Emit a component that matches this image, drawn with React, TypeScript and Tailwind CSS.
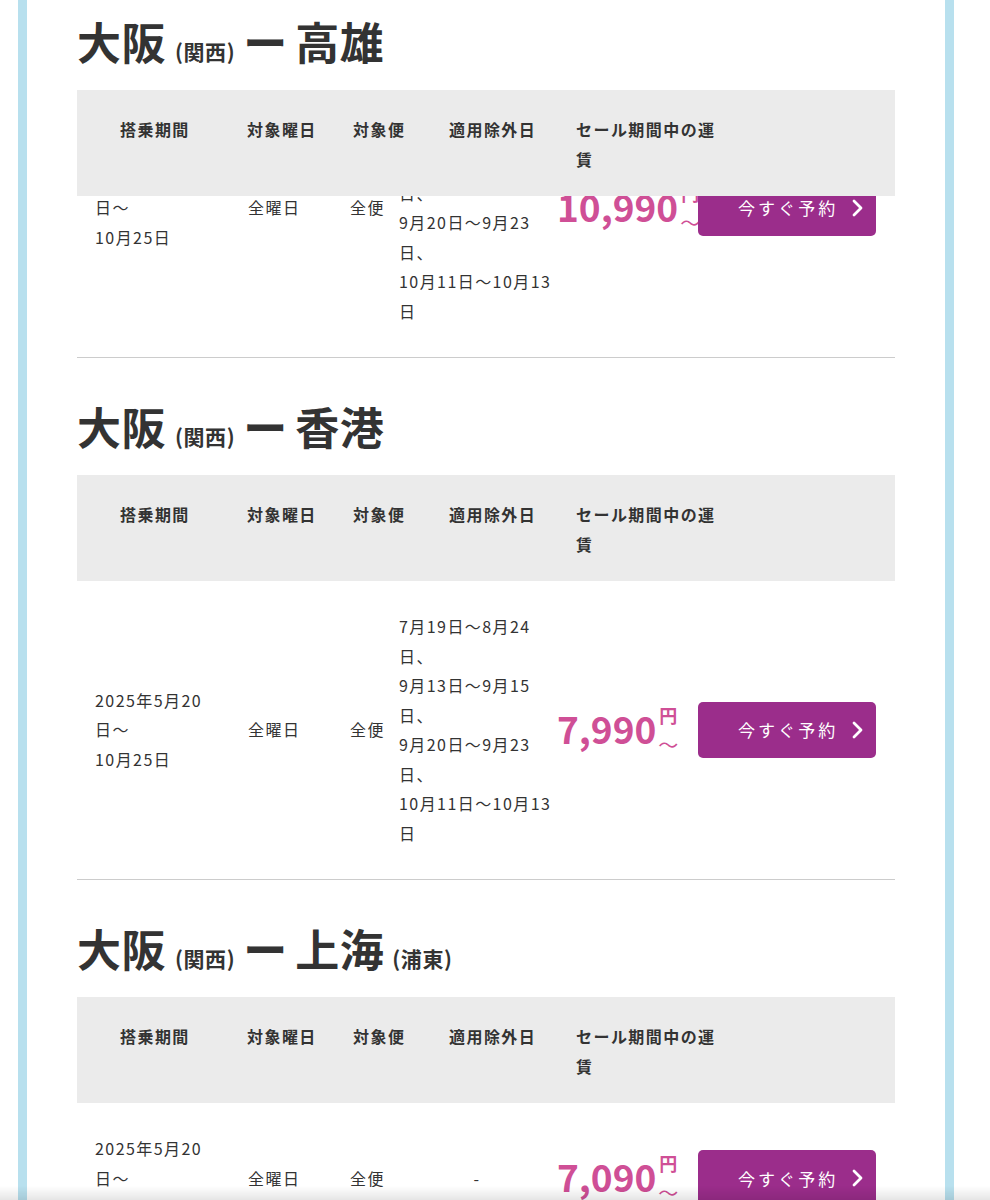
import React from "react";

type Route = {
  from: string;
  fromSub: string;
  to: string;
  toSub?: string;
  price: string;
  excl: string[] | null;
  clipped?: boolean;
};

const routes: Route[] = [
  {
    from: "大阪",
    fromSub: "(関西)",
    to: "高雄",
    price: "10,990",
    excl: ["7月19日～8月24日、", "9月13日～9月15日、", "9月20日～9月23日、", "10月11日～10月13日"],
    clipped: true,
  },
  {
    from: "大阪",
    fromSub: "(関西)",
    to: "香港",
    price: "7,990",
    excl: ["7月19日～8月24日、", "9月13日～9月15日、", "9月20日～9月23日、", "10月11日～10月13日"],
  },
  {
    from: "大阪",
    fromSub: "(関西)",
    to: "上海",
    toSub: "(浦東)",
    price: "7,090",
    excl: null,
  },
];

function Chevron() {
  return (
    <svg width="13" height="20" viewBox="0 0 13 20" fill="none">
      <polyline points="3,3 10,10 3,17" stroke="white" strokeWidth="2.8" strokeLinecap="round" strokeLinejoin="round" />
    </svg>
  );
}

function HeadBand() {
  return (
    <div className="flex items-start h-[106px] bg-[#ebebeb] pt-[24px] pl-[43px] text-[16px] font-bold leading-[30px] tracking-[0.09em] text-[#333]">
      <div className="w-[127px]">搭乗期間</div>
      <div className="w-[106px]">対象曜日</div>
      <div className="w-[96px]">対象便</div>
      <div className="w-[127px]">適用除外日</div>
      <div className="w-[150px]">セール期間中の運賃</div>
    </div>
  );
}

function DataRow({ r }: { r: Route }) {
  return (
    <div className="flex items-center py-[31px] pl-[18px] pr-[18px] text-[16px] leading-[29.5px] tracking-[0.09em] text-[#333]">
      <div className="w-[153px]">
        <div className="w-[120px]">2025年5月20日～</div>
        <div>10月25日</div>
      </div>
      <div className="w-[102px]">全曜日</div>
      <div className="w-[49px]">全便</div>
      <div className="w-[158px]">
        {r.excl ? (
          r.excl.map((t) => (
            <div key={t} className="w-[158px]">
              {t}
            </div>
          ))
        ) : (
          <div className="text-center pr-[2px]">-</div>
        )}
      </div>
      <div className="w-[141px] flex items-start font-bold text-[#cf4f96]">
        <span className="text-[37px] leading-[46px] tracking-[0]">{r.price}</span>
        <span className="flex flex-col items-center ml-[2px] mt-[-2px] tracking-[0]">
          <span className="text-[18px] leading-[24px]">円</span>
          <span className="text-[20px] leading-[20px] font-normal mt-[8px]">～</span>
        </span>
      </div>
      <button className="flex items-center w-[178px] h-[56px] rounded-[5px] bg-[#9b2d8b] pl-[40px] text-white text-[17px] tracking-[0.18em]">
        <span>今すぐ予約</span>
        <span className="ml-[13px] flex items-center">
          <Chevron />
        </span>
      </button>
    </div>
  );
}

function Section({ r, first }: { r: Route; first?: boolean }) {
  return (
    <section className={first ? "" : "mt-[38px]"}>
      <h2 className="flex items-baseline h-[60px] leading-[60px] font-bold text-[#333]">
        <span className="text-[44px] tracking-[0.01em]">{r.from}</span>
        <span className="text-[21px] ml-[9px] tracking-[0.03em]">{r.fromSub}</span>
        <span className="text-[44px] ml-[8px]">ー</span>
        <span className="text-[44px] ml-[8px] tracking-[0.01em]">{r.to}</span>
        {r.toSub && <span className="text-[21px] ml-[8px] tracking-[0.03em]">{r.toSub}</span>}
      </h2>
      <div className="mt-[19px]">
        <HeadBand />
      </div>
      {r.clipped ? (
        <div className="h-[161px] overflow-hidden border-b border-[#cccccc] box-content">
          <div className="-mt-[137px]">
            <DataRow r={r} />
          </div>
        </div>
      ) : (
        <div className="border-b border-[#cccccc]">
          <DataRow r={r} />
        </div>
      )}
    </section>
  );
}

export default function App() {
  return (
    <div className="relative h-[1200px] overflow-hidden bg-white font-['Noto_Sans_CJK_JP','Noto_Sans',sans-serif]">
      <div className="flex h-full pl-[18px]">
        <div className="w-[9px] h-full bg-[#b8e0ee]" />
        <div className="w-[918px] h-full bg-white px-[50px] pt-[11px]">
          {routes.map((r, i) => (
            <Section key={r.to} r={r} first={i === 0} />
          ))}
        </div>
        <div className="w-[9px] h-full bg-[#b8e0ee]" />
      </div>
      <div className="fixed left-0 right-0 bottom-0 h-[14px] bg-gradient-to-t from-black/10 to-transparent" />
    </div>
  );
}
